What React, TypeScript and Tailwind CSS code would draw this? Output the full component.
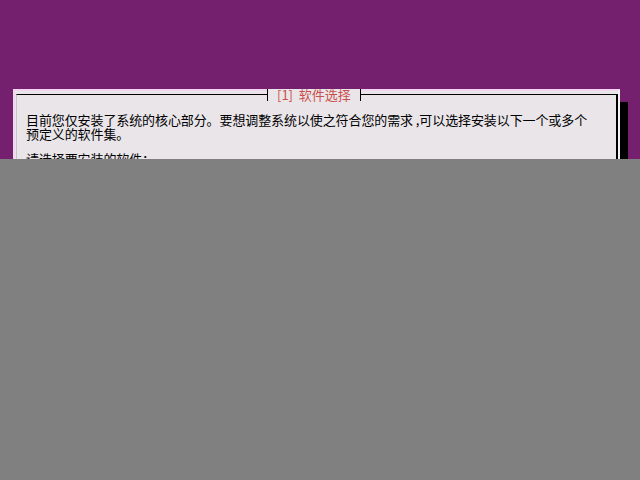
import React from "react";

export default function App() {
  return (
    <div
      className="relative w-[640px] h-[480px] overflow-hidden bg-[#74206f] pt-[89px] pl-[13px]"
      style={{ fontFamily: '"Noto Sans CJK SC", "Noto Sans", sans-serif' }}
    >
      <div className="w-[607px] h-[400px] bg-[#e9e5e9] border-l-2 border-t-2 border-r-2 border-l-[#f3d5ef] border-t-[#f3d5ef] border-r-[#f4f1f4] shadow-[8px_13px_0_0_#000] pt-[3px] pl-px">
        <div className="relative h-full border-t border-t-black border-r-2 border-r-black border-l border-l-[#c9c4c9] pl-[9px] pt-[18px]">
          <div className="absolute left-[250px] -top-[6px] flex items-stretch h-[12px] bg-[#e9e5e9]">
            <div className="w-px bg-black" />
            <div className="px-[9px] flex items-center text-[13px] leading-[12px] text-[#c9504d]">
              [1]&nbsp;&nbsp;软件选择
            </div>
            <div className="w-px bg-black" />
          </div>
          <div className="text-[13px] leading-[14px] text-black tracking-[-0.1px]">
            <div>目前您仅安装了系统的核心部分。要想调整系统以使之符合您的需求 ,可以选择安装以下一个或多个</div>
            <div>预定义的软件集。</div>
            <div className="h-[11px]" />
            <div>请选择要安装的软件：</div>
          </div>
        </div>
      </div>
      <div className="absolute left-0 right-0 top-[159px] bottom-0 bg-[#808080]" />
    </div>
  );
}
